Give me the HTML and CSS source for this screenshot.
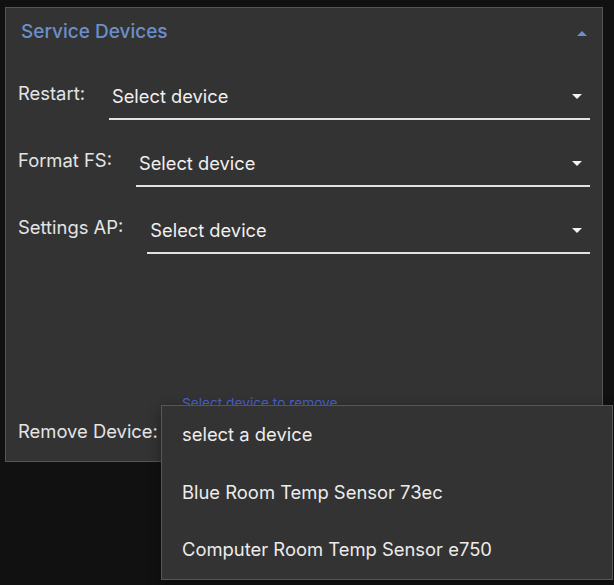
FILE: index.html
```html
<!DOCTYPE html>
<html>
<head>
<meta charset="utf-8">
<link rel="stylesheet" href="styles.css">
</head>
<body>
<div class="panel">
  <div class="panel-header">
    <span class="panel-title">Service Devices</span>
    <span class="caret-up"></span>
  </div>
  <div class="row">
    <span class="label">Restart:</span>
    <div class="select"><span class="value">Select device</span><span class="caret-down"></span></div>
  </div>
  <div class="row">
    <span class="label">Format FS:</span>
    <div class="select"><span class="value">Select device</span><span class="caret-down"></span></div>
  </div>
  <div class="row">
    <span class="label">Settings AP:</span>
    <div class="select"><span class="value">Select device</span><span class="caret-down"></span></div>
  </div>
  <div class="remove-row">
    <span class="label">Remove Device:</span>
    <div class="remove-field">
      <span class="helper">Select device to remove</span>
    </div>
  </div>
</div>
<div class="menu">
  <div class="menu-item">select a device</div>
  <div class="menu-item">Blue Room Temp Sensor 73ec</div>
  <div class="menu-item">Computer Room Temp Sensor e750</div>
</div>
</body>
</html>
```

FILE: styles.css
```css
html, body {
  margin: 0;
  padding: 0;
  background: #111111;
  font-family: Inter, "Noto Sans", sans-serif;
  color: #e6e6e6;
}
body {
  position: relative;
  width: 614px;
  height: 585px;
  overflow: hidden;
}
.panel {
  position: relative;
  margin: 7px 0 0 5px;
  height: 453px;
  background: #333333;
  border: 1px solid #555555;
  display: flex;
  flex-direction: column;
  padding: 0 12px 0 12px;
  box-sizing: content-box;
  width: 572px;
}
.panel-header {
  display: flex;
  align-items: center;
  justify-content: space-between;
  padding: 12px 0 0 3px;
  height: 24px;
}
.panel-title {
  color: #6c8fca;
  font-size: 19px;
  line-height: 24px;
  font-weight: 500;
}
.caret-up {
  width: 0;
  height: 0;
  border-left: 5px solid transparent;
  border-right: 5px solid transparent;
  border-bottom: 5px solid #6c8fca;
  margin-right: 3px;
  margin-top: 3px;
}
.row {
  display: flex;
  align-items: flex-start;
  margin-top: 23px;
  gap: 24px;
}
.panel-header + .row {
  margin-top: 32px;
}
.label {
  font-size: 18.4px;
  line-height: 24px;
  color: #e4e4e4;
  padding-top: 5px;
  white-space: nowrap;
}
.select {
  flex: 1;
  display: flex;
  align-items: center;
  justify-content: space-between;
  padding: 8px 8px 10px 3px;
  border-bottom: 2px solid #e2e2e2;
  height: 24px;
}
.value {
  font-size: 18.3px;
  line-height: 24px;
  color: #f0f0f0;
}
.caret-down {
  width: 0;
  height: 0;
  border-left: 5px solid transparent;
  border-right: 5px solid transparent;
  border-top: 5px solid #f2f2f2;
}
.remove-row {
  margin-top: auto;
  display: flex;
  align-items: flex-end;
  gap: 21px;
  padding-bottom: 18px;
}
.remove-row .label {
  padding-top: 0;
}
.remove-field {
  flex: 1;
  height: 52px;
  position: relative;
}
.helper {
  position: absolute;
  left: 3px;
  top: 4px;
  font-size: 13.7px;
  line-height: 16px;
  color: #4b62c8;
}
.menu {
  position: absolute;
  left: 161px;
  top: 405px;
  width: 450px;
  background: #333333;
  border: 1px solid #575757;
  box-shadow: 0 4px 12px rgba(0,0,0,0.4);
}
.menu-item {
  height: 57.5px;
  line-height: 57.5px;
  padding-left: 20px;
  font-size: 18.4px;
  color: #ececec;
  white-space: nowrap;
}
```
